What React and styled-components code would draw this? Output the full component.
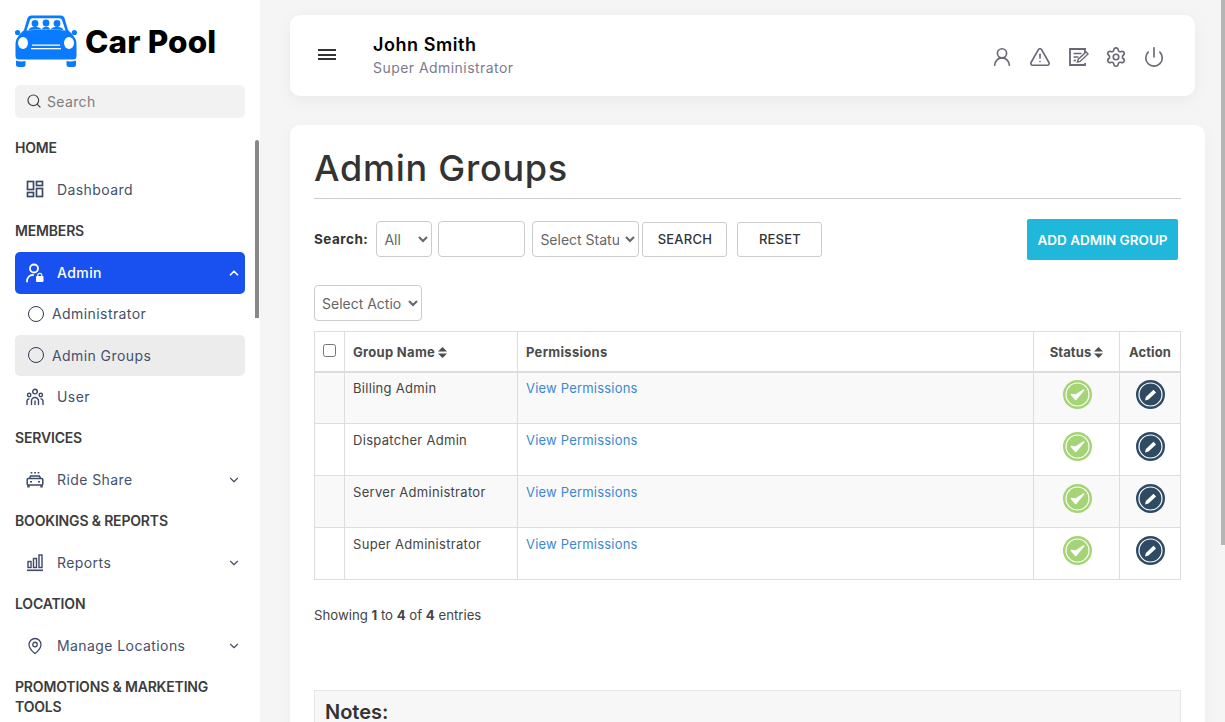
import React from "react";
import styled, { createGlobalStyle } from "styled-components";
import { ChevronDown, ChevronUp, MapPin, Power, Search, Settings, TriangleAlert, UserRound } from "lucide-react";

const Global = createGlobalStyle`
  html, body { margin: 0; padding: 0; height: 100%; }
  body {
    background: #f5f5f5;
    font-family: Inter, "Open Sans", "Liberation Sans", sans-serif;
    color: #333;
  }
  * { box-sizing: border-box; }
`;

const Shell = styled.div`
  position: relative;
  display: flex;
  height: 100vh;
  overflow: hidden;
`;

/* sidebar */
const Sidebar = styled.aside`
  position: relative;
  width: 260px;
  flex: none;
  height: 100%;
  background: #fff;
  display: flex;
  flex-direction: column;
`;

const SideThumb = styled.div`
  position: absolute;
  top: 140px;
  right: 1px;
  width: 4px;
  height: 178px;
  background: #888;
  border-radius: 3px 3px 0 0;
`;

const PageThumb = styled.div`
  position: absolute;
  top: 0;
  right: 0;
  width: 4px;
  height: 545px;
  background: #b5b5b5;
`;

const Brand = styled.div`
  display: flex;
  align-items: center;
  gap: 8px;
  padding: 15px 0 0 15px;
  height: 67px;
  flex: none;
`;

const BrandName = styled.span`
  font-size: 31.5px;
  font-weight: 800;
  color: #000;
  letter-spacing: 0.15px;
`;

const SideSearch = styled.div`
  display: flex;
  align-items: center;
  gap: 5px;
  width: 230px;
  height: 33px;
  margin: 18px 0 9px 15px;
  padding: 0 11px 1px;
  flex: none;
  border-radius: 5px;
  background: #f2f2f2;
  color: #7d7d7d;
  font-size: 14px;
  letter-spacing: 0.35px;
  svg { color: #444; }
`;

const Nav = styled.nav`
  flex: 1;
  min-height: 0;
  overflow: hidden;
  padding: 0 15px;
`;

const SectionTitle = styled.div`
  padding: 10.75px 0;
  font-size: 14px;
  line-height: 20px;
  font-weight: 600;
  color: #3c3c3c;
  letter-spacing: -0.17px;
`;

const NavRow = styled.div`
  display: flex;
  align-items: center;
  height: ${(p) => (p.$active ? "42px" : "41.5px")};
  margin-bottom: ${(p) => (p.$active ? "-0.5px" : "0")};
  padding: 0 ${(p) => (p.$sub ? "0" : "4px")} 0 ${(p) => (p.$sub ? "13px" : "11px")};
  border-radius: 5px;
  font-size: 14px;
  background: ${(p) => (p.$active ? "#1851ef" : p.$current ? "#ececec" : "transparent")};
  color: ${(p) => (p.$active ? "#fff" : "#44506b")};
  font-weight: ${(p) => (p.$active ? 500 : 400)};
`;

const NavIcon = styled.span`
  display: flex;
  width: 18px;
  margin-right: 13px;
  justify-content: center;
  flex: none;
`;

const Ring = styled.span`
  width: 16px;
  height: 16px;
  margin-right: 8px;
  flex: none;
  border: 1.6px solid #2f3b55;
  border-radius: 50%;
`;

const NavLabel = styled.span`
  flex: 1;
  letter-spacing: 0.42px;
`;

/* main column */
const Main = styled.main`
  flex: 1;
  min-width: 0;
  height: 100%;
  overflow: hidden;
  padding: 15px 20px 0 30px;
`;

const Topbar = styled.header`
  display: flex;
  align-items: center;
  height: 81px;
  margin-right: 10px;
  padding: 0 30px 0 28px;
  background: #fff;
  border-radius: 10px;
  box-shadow: 0 4px 16px rgba(0, 0, 0, 0.05);
`;

const Burger = styled.div`
  display: flex;
  flex-direction: column;
  gap: 2.5px;
  width: 18px;
  margin: -2px 37px 0 0;
  span { display: block; height: 2px; background: #333; }
`;

const Who = styled.div`
  flex: 1;
  display: flex;
  flex-direction: column;
  margin-top: -1px;
`;

const WhoName = styled.div`
  font-size: 18px;
  line-height: 24px;
  font-weight: 600;
  color: #000;
  letter-spacing: 0.55px;
`;

const WhoRole = styled.div`
  font-size: 14px;
  line-height: 21px;
  color: #7c7b8f;
  letter-spacing: 0.45px;
`;

const TopIcons = styled.div`
  display: flex;
  align-items: center;
  gap: 16px;
  color: #6a6777;
  margin-top: 3px;
`;

const Card = styled.section`
  height: 816px;
  margin-top: 29px;
  padding: 18px 24px 0;
  background: #fff;
  border-radius: 10px 10px 0 0;
  box-shadow: 0 4px 16px rgba(0, 0, 0, 0.04);
`;

const Title = styled.h1`
  margin: 0;
  padding-bottom: 5px;
  font-size: 36px;
  line-height: 50px;
  font-weight: 450;
  color: #333;
  letter-spacing: 0.75px;
  border-bottom: 1px solid #ccc;
`;

const Filters = styled.div`
  display: flex;
  align-items: center;
  height: 41px;
  margin-top: 20px;
  padding-right: 3px;
`;

const FilterLabel = styled.label`
  font-size: 13.5px;
  font-weight: 700;
  color: #333;
  letter-spacing: 0.5px;
  margin-right: 8px;
  margin-top: -1px;
`;

const Select = styled.select`
  width: ${(p) => p.$w}px;
  height: 36px;
  margin-right: ${(p) => p.$mr || 0}px;
  margin-top: -1px;
  padding: 0 3px;
  font: inherit;
  font-size: 14px;
  color: #666;
  background: #fff;
  border: 1px solid #ccc;
  border-radius: 4px;
`;

const TextInput = styled.input`
  width: 87px;
  height: 36px;
  margin-right: 7px;
  margin-top: -1px;
  border: 1px solid #ccc;
  border-radius: 4px;
  background: #fff;
`;

const PlainButton = styled.button`
  width: 85px;
  height: 35px;
  margin-right: ${(p) => p.$mr || 0}px;
  margin-top: -1px;
  font: inherit;
  font-size: 13px;
  font-weight: 500;
  letter-spacing: 0.2px;
  color: #333;
  background: #fff;
  border: 1px solid #ccc;
  border-radius: 3px;
`;

const AddButton = styled.button`
  width: 151px;
  height: 41px;
  margin-left: auto;
  padding: 0;
  font: inherit;
  font-size: 13.5px;
  font-weight: 600;
  color: #fff;
  background: #20b8da;
  border: 0;
  border-radius: 2px;
`;

const ActionRow = styled.div`
  margin-top: 25px;
  height: 36px;
  display: flex;
  select { margin-top: 0; }
`;

const Table = styled.table`
  width: 866px;
  margin-top: 10px;
  border-collapse: collapse;
  table-layout: fixed;
  font-size: 13px;
  th, td { border: 1px solid #ddd; padding: 6.5px 8px; vertical-align: top; }
  th {
    height: 40px;
    padding: 9px 8px 7px;
    border-bottom-width: 2px;
    vertical-align: middle;
    text-align: left;
    font-weight: 700;
    color: #4c4c4c;
    letter-spacing: 0.3px;
  }
  td { height: 52px; line-height: 18px; color: #444; letter-spacing: 0.3px; }
  tbody tr:nth-child(odd) td { background: #f9f9f9; }
  input { margin: -3px 0 0; display: block; }
`;

const CenterTh = styled.th`
  && { text-align: center; padding: 9px 0 7px; letter-spacing: 0.1px; }
`;

const IconCell = styled.td`
  && { padding: 7.5px ${(p) => p.$pr || 0}px 0 ${(p) => p.$pl || 0}px; text-align: center; }
  svg { display: block; margin: 0 auto; }
`;

const SortWrap = styled.span`
  display: inline-block;
  margin-left: 3px;
  vertical-align: -1px;
`;

const PermLink = styled.a`
  color: #3b87d0;
  text-decoration: none;
  letter-spacing: 0.2px;
`;

const Entries = styled.div`
  margin-top: 25px;
  font-size: 13.2px;
  line-height: 20px;
  color: #444;
  b { font-weight: 700; }
`;

const Notes = styled.div`
  margin-top: 65px;
  width: 867px;
  min-height: 120px;
  padding: 11px 10px;
  background: #f7f7f7;
  border: 1px solid #e6e6e6;
`;

const NotesTitle = styled.h3`
  margin: 0;
  font-size: 20px;
  line-height: 20px;
  font-weight: 600;
  color: #333;
`;

/* drawings */
const CarLogo = () => (
  <svg width="62" height="52" viewBox="0 0 62 52" fill="#0a7bff">
    <path d="M9 15 L12.5 3 Q13.3.5 16 .5 L46 .5 Q48.7.5 49.5 3 L53 15 Q58 19 60.5 24 Q61.5 26 61.5 29 L61.5 41 Q61.5 44.5 58 44.5 L4 44.5 Q.5 44.5 .5 41 L.5 29 Q.5 26 1.5 24 Q4 19 9 15Z" />
    <circle cx="2.6" cy="17.5" r="2.6" />
    <circle cx="59.4" cy="17.5" r="2.6" />
    <path d="M1 45.5q5 1.5 9.5.5v3.5q0 2.5-2.5 2.5H3.5Q1 52 1 49.5zM51.5 46q4.5 1 9.5-.5v4q0 2.5-2.5 2.5H54q-2.5 0-2.5-2.5z" />
    <path fill="#fff" d="M11.5 15.5 L15 5 Q15.6 3.3 17.5 3.3 L44.5 3.3 Q46.4 3.3 47 5 L50.5 15.5 Q31 13.5 11.5 15.5Z" />
    <circle cx="20" cy="8.5" r="3.4" />
    <circle cx="31" cy="8" r="3.4" />
    <circle cx="42" cy="8.5" r="3.4" />
    <path d="M13.5 15 Q15 11.5 20 12 Q25 11.5 26.5 14.5 Q28 11.5 31 11.8 Q34 11.5 35.5 14.5 Q37 11.5 42 12 Q47 11.5 48.5 15 Q31 13.6 13.5 15Z" />
    <ellipse cx="8" cy="28" rx="5" ry="6" fill="#fff" />
    <ellipse cx="54" cy="28" rx="5" ry="6" fill="#fff" />
    <rect x="17" y="29.5" width="28" height="1.3" fill="#fff" />
    <rect x="16" y="33" width="30" height="1.3" fill="#fff" />
  </svg>
);

const DashIcon = () => (
  <svg width="18" height="18" viewBox="0 0 18 18" fill="none" stroke="#3d4966" strokeWidth="1.7">
    <rect x="1.5" y="1.5" width="6" height="8" />
    <rect x="10.5" y="1.5" width="6" height="4" />
    <rect x="1.5" y="12.5" width="6" height="4" />
    <rect x="10.5" y="8.5" width="6" height="8" />
  </svg>
);

const AdminIcon = () => (
  <svg width="18" height="20" viewBox="0 0 18 20" fill="none" stroke="#fff" strokeWidth="1.8">
    <circle cx="8" cy="5.5" r="4" />
    <path d="M1 18.5c0-4 2.5-6.5 6-6.5" strokeLinecap="round" />
    <rect x="10" y="13" width="7.5" height="6" rx="1" fill="#fff" stroke="none" />
    <path d="M11.8 13.5v-1.2a2 2 0 0 1 4 0v1.2" strokeWidth="1.2" />
  </svg>
);

const UsersIcon = () => (
  <svg width="18" height="18" viewBox="0 0 18 18" fill="none" stroke="#3d4966" strokeWidth="1.4" strokeLinecap="round">
    <circle cx="9" cy="3.6" r="2.3" />
    <circle cx="3.2" cy="7" r="1.7" />
    <circle cx="14.8" cy="7" r="1.7" />
    <path d="M5.5 16.5v-3.5a3.5 3.5 0 0 1 7 0v3.5" />
    <path d="M1 16.5v-3c0-1.2.6-2.4 2-2.6M17 16.5v-3c0-1.2-.6-2.4-2-2.6" />
    <path d="M9 13v3.5" />
  </svg>
);

const RideIcon = () => (
  <svg width="18" height="18" viewBox="0 0 18 18" fill="none" stroke="#3d4966" strokeWidth="1.5">
    <path d="M3.5 7.5 4.6 5h8.8l1.1 2.5" />
    <rect x="1.2" y="7.5" width="15.6" height="6.5" rx="1" />
    <path d="M2.5 14v2.5M15.5 14v2.5" strokeWidth="2.4" />
    <path d="M4 10.8h2M12 10.8h2" />
    <path d="M5.5 1v1.6M9 1v1.6M12.5 1v1.6" strokeWidth="1.7" />
  </svg>
);

const ReportsIcon = () => (
  <svg width="18" height="18" viewBox="0 0 18 18" fill="none" stroke="#3d4966" strokeWidth="1.4">
    <rect x="2" y="7.5" width="3" height="6" />
    <rect x="7.5" y="4.5" width="3" height="9" />
    <rect x="13" y="1" width="3" height="12.5" />
    <path d="M1 16.3h16" strokeWidth="1.6" />
  </svg>
);

const NoteIcon = () => (
  <svg width="22" height="22" viewBox="0 0 22 22" fill="none" stroke="currentColor" strokeWidth="1.8">
    <path d="M18 9V3H3v16h15v-2" />
    <path d="M6.5 7.5h8M6.5 11h5M6.5 14.5h2.5" strokeWidth="1.6" />
    <path d="M10.5 16l.6-2.6 8-7.4 2 2-8 7.4z" strokeWidth="1.4" fill="#fff" />
  </svg>
);

const SortIcon = () => (
  <SortWrap>
    <svg width="9" height="11" viewBox="0 0 9 11" fill="#4c4c4c">
      <path d="M4.5 0 9 4.6H0zM4.5 11 0 6.4h9z" />
    </svg>
  </SortWrap>
);

const StatusOk = () => (
  <svg width="29" height="29" viewBox="0 0 29 29">
    <circle cx="14.5" cy="14.5" r="14.5" fill="#a5d477" />
    <circle cx="14.5" cy="14.5" r="11.5" fill="none" stroke="#fff" strokeWidth="1.2" />
    <path d="M8.5 14.5l4.2 5 8-9.5-8 5.2z" fill="#fff" stroke="#fff" strokeWidth="1.6" strokeLinejoin="round" />
  </svg>
);

const EditBtn = () => (
  <svg width="29" height="29" viewBox="0 0 29 29">
    <circle cx="14.5" cy="14.5" r="14.5" fill="#2f4a63" />
    <circle cx="14.5" cy="14.5" r="11.5" fill="none" stroke="#fff" strokeWidth="1.2" />
    <path d="M9 20.5l.9-3.5 7.6-7.2 2.6 2.6-7.6 7.2z" fill="#fff" />
  </svg>
);

const Chevron = ({ up }) =>
  up ? <ChevronUp size={14} strokeWidth={3} /> : <ChevronDown size={14} strokeWidth={2} color="#44506b" />;

const groups = ["Billing Admin", "Dispatcher Admin", "Server Administrator", "Super Administrator"];

export default function App() {
  return (
    <Shell>
      <Global />
      <Sidebar>
        <Brand>
          <CarLogo />
          <BrandName>Car Pool</BrandName>
        </Brand>
        <SideSearch>
          <Search size={16} strokeWidth={1.8} />
          Search
        </SideSearch>
        <Nav>
          <SectionTitle>HOME</SectionTitle>
          <NavRow>
            <NavIcon><DashIcon /></NavIcon>
            <NavLabel>Dashboard</NavLabel>
          </NavRow>
          <SectionTitle>MEMBERS</SectionTitle>
          <NavRow $active>
            <NavIcon><AdminIcon /></NavIcon>
            <NavLabel>Admin</NavLabel>
            <Chevron up />
          </NavRow>
          <NavRow $sub>
            <Ring />
            <NavLabel>Administrator</NavLabel>
          </NavRow>
          <NavRow $sub $current>
            <Ring />
            <NavLabel>Admin Groups</NavLabel>
          </NavRow>
          <NavRow>
            <NavIcon><UsersIcon /></NavIcon>
            <NavLabel>User</NavLabel>
          </NavRow>
          <SectionTitle>SERVICES</SectionTitle>
          <NavRow>
            <NavIcon><RideIcon /></NavIcon>
            <NavLabel>Ride Share</NavLabel>
            <Chevron />
          </NavRow>
          <SectionTitle>BOOKINGS &amp; REPORTS</SectionTitle>
          <NavRow>
            <NavIcon><ReportsIcon /></NavIcon>
            <NavLabel>Reports</NavLabel>
            <Chevron />
          </NavRow>
          <SectionTitle>LOCATION</SectionTitle>
          <NavRow>
            <NavIcon><MapPin size={18} strokeWidth={1.7} color="#3d4966" /></NavIcon>
            <NavLabel>Manage Locations</NavLabel>
            <Chevron />
          </NavRow>
          <SectionTitle>PROMOTIONS &amp; MARKETING TOOLS</SectionTitle>
        </Nav>
        <SideThumb />
      </Sidebar>

      <Main>
        <Topbar>
          <Burger><span /><span /><span /></Burger>
          <Who>
            <WhoName>John Smith</WhoName>
            <WhoRole>Super Administrator</WhoRole>
          </Who>
          <TopIcons>
            <UserRound size={22} strokeWidth={1.8} />
            <TriangleAlert size={22} strokeWidth={1.8} />
            <NoteIcon />
            <Settings size={22} strokeWidth={1.8} />
            <Power size={22} strokeWidth={1.8} />
          </TopIcons>
        </Topbar>

        <Card>
          <Title>Admin Groups</Title>
          <Filters>
            <FilterLabel>Search:</FilterLabel>
            <Select $w={56} $mr={6}><option>All</option></Select>
            <TextInput />
            <Select $w={107} $mr={3}><option>Select Status</option></Select>
            <PlainButton $mr={10}>SEARCH</PlainButton>
            <PlainButton>RESET</PlainButton>
            <AddButton>ADD ADMIN GROUP</AddButton>
          </Filters>
          <ActionRow>
            <Select $w={108}><option>Select Action</option></Select>
          </ActionRow>
          <Table>
            <colgroup>
              <col width="30" />
              <col width="173" />
              <col width="516" />
              <col width="86" />
              <col width="61" />
            </colgroup>
            <thead>
              <tr>
                <th><input type="checkbox" /></th>
                <th>Group Name<SortIcon /></th>
                <th>Permissions</th>
                <CenterTh>Status<SortIcon /></CenterTh>
                <CenterTh>Action</CenterTh>
              </tr>
            </thead>
            <tbody>
              {groups.map((g) => (
                <tr key={g}>
                  <td />
                  <td>{g}</td>
                  <td><PermLink href="#">View Permissions</PermLink></td>
                  <IconCell $pl={1}><StatusOk /></IconCell>
                  <IconCell><EditBtn /></IconCell>
                </tr>
              ))}
            </tbody>
          </Table>
          <Entries>Showing <b>1</b> to <b>4</b> of <b>4</b> entries</Entries>
          <Notes>
            <NotesTitle>Notes:</NotesTitle>
          </Notes>
        </Card>
      </Main>
      <PageThumb />
    </Shell>
  );
}
